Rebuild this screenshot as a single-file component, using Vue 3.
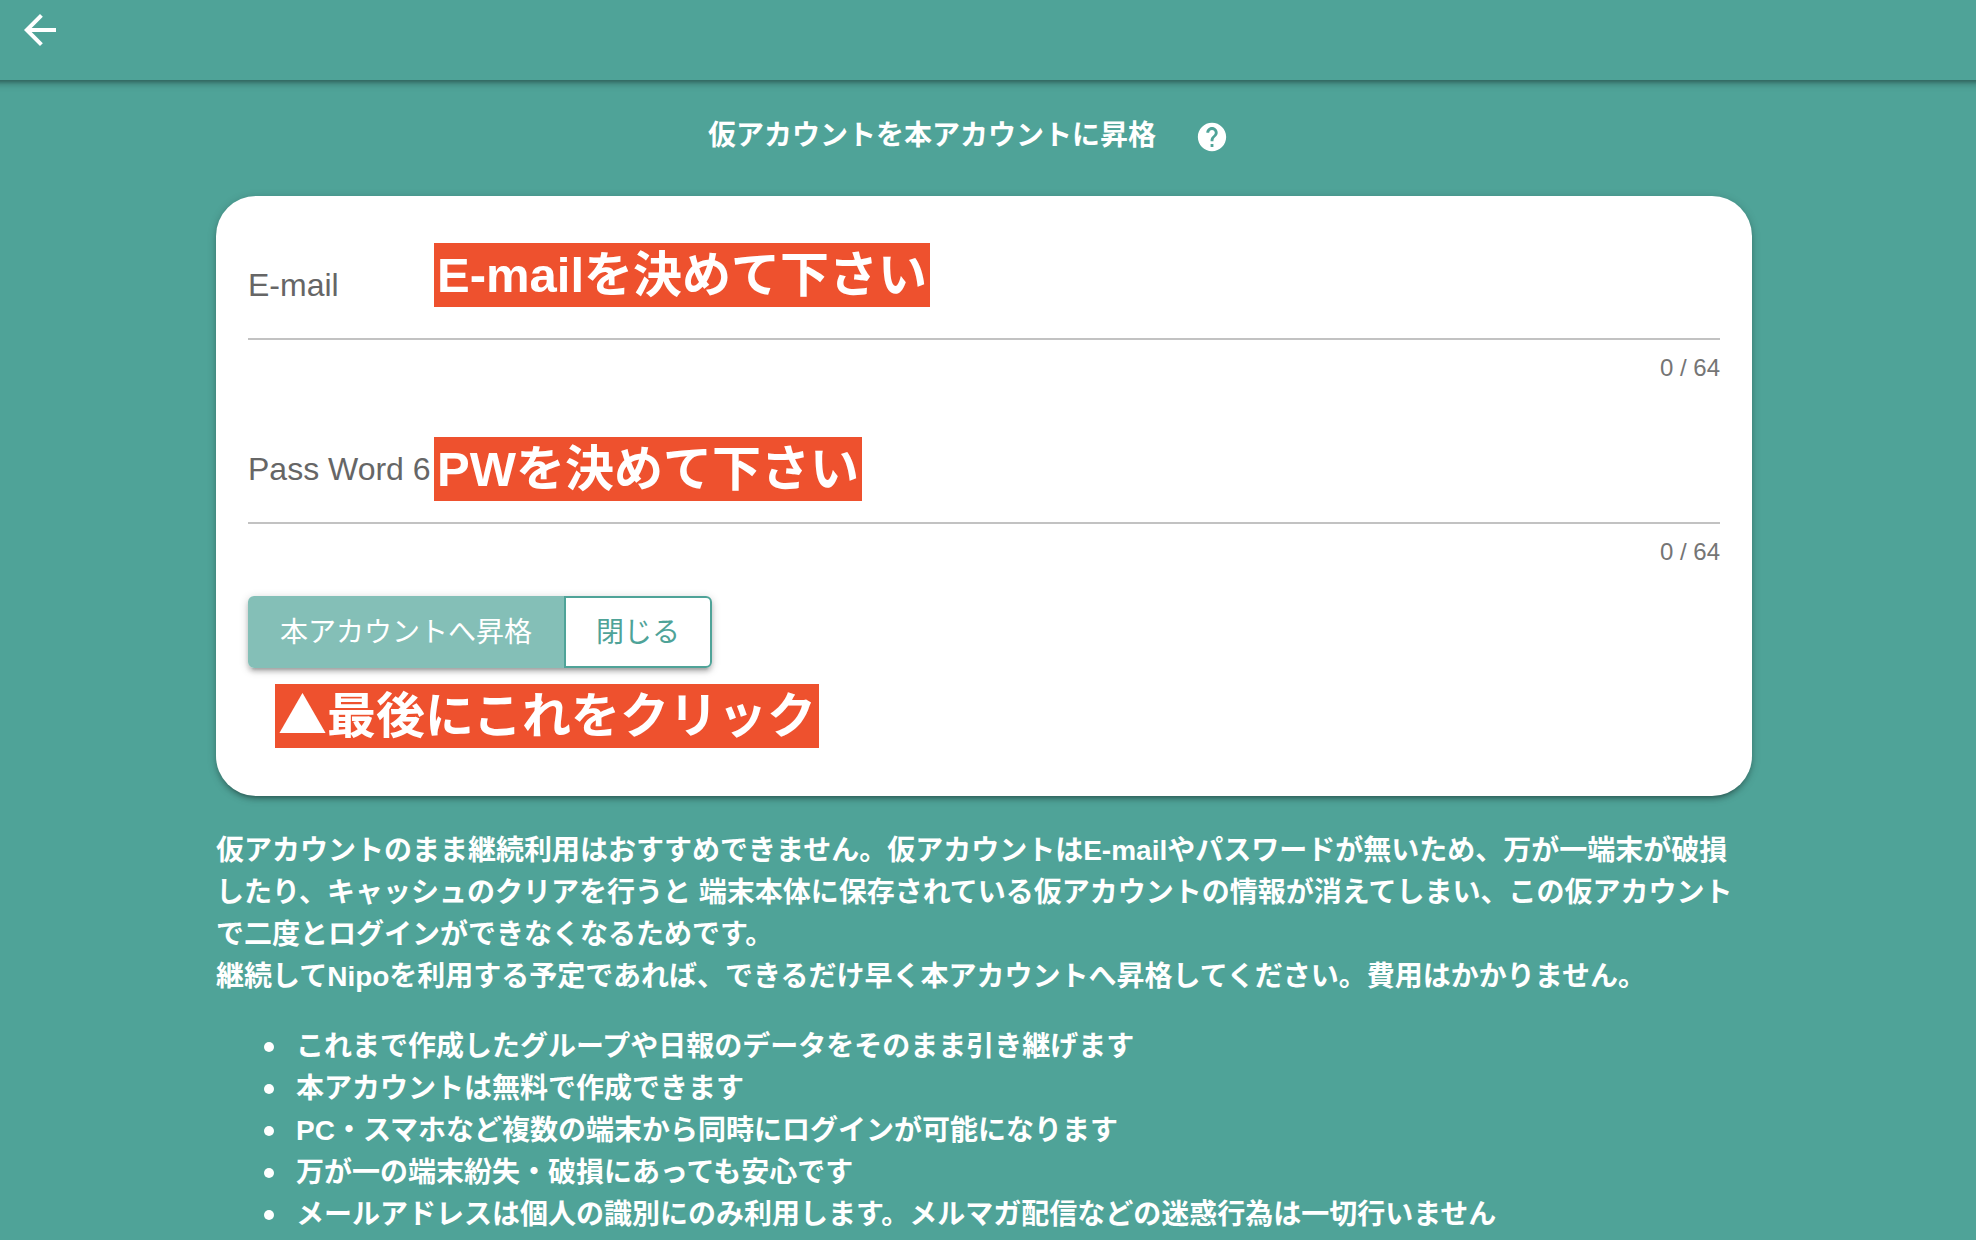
<script setup>
import { ref } from 'vue'

const email = ref('')
const password = ref('')

const benefits = [
  'これまで作成したグループや日報のデータをそのまま引き継げます',
  '本アカウントは無料で作成できます',
  'PC・スマホなど複数の端末から同時にログインが可能になります',
  '万が一の端末紛失・破損にあっても安心です',
  'メールアドレスは個人の識別にのみ利用します。メルマガ配信などの迷惑行為は一切行いません',
]
</script>

<template>
  <div class="page">
    <header class="toolbar">
      <button class="icon-button back" type="button" aria-label="戻る">
        <svg viewBox="0 0 24 24" width="48" height="48" aria-hidden="true">
          <path d="M20 11H7.83l5.59-5.59L12 4l-8 8 8 8 1.41-1.41L7.83 13H20v-2z" />
        </svg>
      </button>
    </header>

    <main class="content">
      <div class="title-row">
        <h1 class="title">仮アカウントを本アカウントに昇格</h1>
        <button class="icon-button help" type="button" aria-label="ヘルプ">
          <svg viewBox="0 0 24 24" width="34" height="34" aria-hidden="true">
            <path d="M12 2C6.48 2 2 6.48 2 12s4.48 10 10 10 10-4.48 10-10S17.52 2 12 2zm1 17h-2v-2h2v2zm2.07-7.75l-.9.92C13.45 12.9 13 13.5 13 15h-2v-.5c0-1.1.45-2.1 1.17-2.83l1.24-1.26c.37-.36.59-.86.59-1.41 0-1.1-.9-2-2-2s-2 .9-2 2H8c0-2.21 1.79-4 4-4s4 1.79 4 4c0 .88-.36 1.68-.93 2.25z" />
          </svg>
        </button>
      </div>

      <form class="card" @submit.prevent>
        <div class="field">
          <div class="control">
            <label for="email">E-mail</label>
            <input id="email" v-model="email" type="email" maxlength="64" />
          </div>
          <div class="counter">{{ email.length }} / 64</div>
          <span class="note note-email">E-mailを決めて下さい</span>
        </div>

        <div class="field">
          <div class="control">
            <label for="password">Pass Word 6</label>
            <input id="password" v-model="password" type="password" maxlength="64" />
          </div>
          <div class="counter">{{ password.length }} / 64</div>
          <span class="note note-password">PWを決めて下さい</span>
        </div>

        <div class="button-group">
          <button class="button primary" type="submit" disabled>本アカウントへ昇格</button>
          <button class="button outline" type="button">閉じる</button>
        </div>
        <div class="note note-submit">▲最後にこれをクリック</div>
      </form>

      <p class="description">
        仮アカウントのまま継続利用はおすすめできません。仮アカウントはE-mailやパスワードが無いため、万が一端末が破損したり、キャッシュのクリアを行うと 端末本体に保存されている仮アカウントの情報が消えてしまい、この仮アカウントで二度とログインができなくなるためです。<br />継続してNipoを利用する予定であれば、できるだけ早く本アカウントへ昇格してください。費用はかかりません。
      </p>
      <ul class="benefits">
        <li v-for="benefit in benefits" :key="benefit">{{ benefit }}</li>
      </ul>
    </main>
  </div>
</template>

<style>
body {
  margin: 0;
  background: #4fa398;
}
</style>

<style scoped>
.page {
  box-sizing: border-box;
  min-height: 100vh;
  overflow: clip;
  background: #4fa398;
  color: #fff;
  font-family: "Liberation Sans", "Noto Sans CJK JP", sans-serif;
  font-size: 28px;
  line-height: 42px;
}

/* Wider than the page so that its shadow runs evenly to both edges. */
.toolbar {
  box-sizing: border-box;
  height: 80px;
  margin: 0 -12px;
  padding: 6px 28px;
  box-shadow: 0 2px 10px rgba(0, 0, 0, 0.2), 0 4px 4px rgba(0, 0, 0, 0.14), 0 6px 2px -4px rgba(0, 0, 0, 0.12);
}

.icon-button {
  display: flex;
  align-items: center;
  justify-content: center;
  padding: 0;
  border: 0;
  background: none;
  color: inherit;
  cursor: pointer;
}

.icon-button svg {
  fill: currentColor;
}

.content {
  padding: 14px 224px 0 216px;
}

.title-row {
  display: flex;
  align-items: center;
  justify-content: center;
  gap: 8px;
  margin-bottom: 18px;
}

.title {
  margin: 0;
  font-size: 28px;
  font-weight: 700;
}

.help {
  box-sizing: border-box;
  width: 96px;
  height: 84px;
  padding-top: 2px;
}

.card {
  padding: 32px 32px 48px;
  border-radius: 40px;
  background: #fff;
  box-shadow: 0 2px 10px rgba(0, 0, 0, 0.2), 0 4px 4px rgba(0, 0, 0, 0.14), 0 6px 2px -4px rgba(0, 0, 0, 0.12);
}

.field {
  position: relative;
  margin-bottom: 32px;
}

.control {
  display: grid;
  height: 112px;
}

.control label,
.control input {
  grid-area: 1 / 1;
}

.control label {
  align-self: center;
  padding-top: 2px;
  color: #666;
  font-size: 32px;
}

.control input {
  box-sizing: border-box;
  width: 100%;
  padding: 0;
  border: 0;
  border-bottom: 2px solid #c2c2c2;
  outline: 0;
  background: transparent;
  color: #222;
  font: inherit;
  font-size: 32px;
}

.counter {
  padding-top: 16px;
  color: #757575;
  font-size: 24px;
  line-height: 24px;
  text-align: right;
}

.note {
  padding: 0 3px;
  background: #ee512e;
  color: #fff;
  font-size: 49px;
  font-weight: 700;
  line-height: 64px;
  white-space: nowrap;
}

.note-email {
  position: absolute;
  top: 15px;
  left: 186px;
}

.note-password {
  position: absolute;
  top: 25px;
  left: 186px;
}

.note-submit {
  width: fit-content;
  margin: 16px 0 0 27px;
  padding-bottom: 8px;
  font-family: "Noto Sans CJK JP", sans-serif;
  line-height: 56px;
}

.button-group {
  display: flex;
  width: fit-content;
  border-radius: 6px;
  box-shadow: 0 2px 10px rgba(0, 0, 0, 0.2), 0 4px 4px rgba(0, 0, 0, 0.14), 0 6px 2px -4px rgba(0, 0, 0, 0.12);
}

.button {
  box-sizing: border-box;
  height: 72px;
  padding: 2px 30px 0;
  border: 2px solid #4fa398;
  font: inherit;
}

.primary {
  border-color: #84bfb7;
  border-radius: 6px 0 0 6px;
  background: #84bfb7;
  color: #fff;
}

.outline {
  border-radius: 0 6px 6px 0;
  background: #fff;
  color: #4fa398;
  cursor: pointer;
}

.description {
  margin: 34px 0 28px;
  font-weight: 700;
}

.benefits {
  margin: 0;
  padding-left: 48px;
  font-weight: 700;
  list-style: none;
}

.benefits li {
  display: flex;
  align-items: center;
  gap: 22px;
}

.benefits li::before {
  flex: none;
  width: 10px;
  height: 10px;
  border-radius: 50%;
  background: currentColor;
  content: "";
}
</style>
